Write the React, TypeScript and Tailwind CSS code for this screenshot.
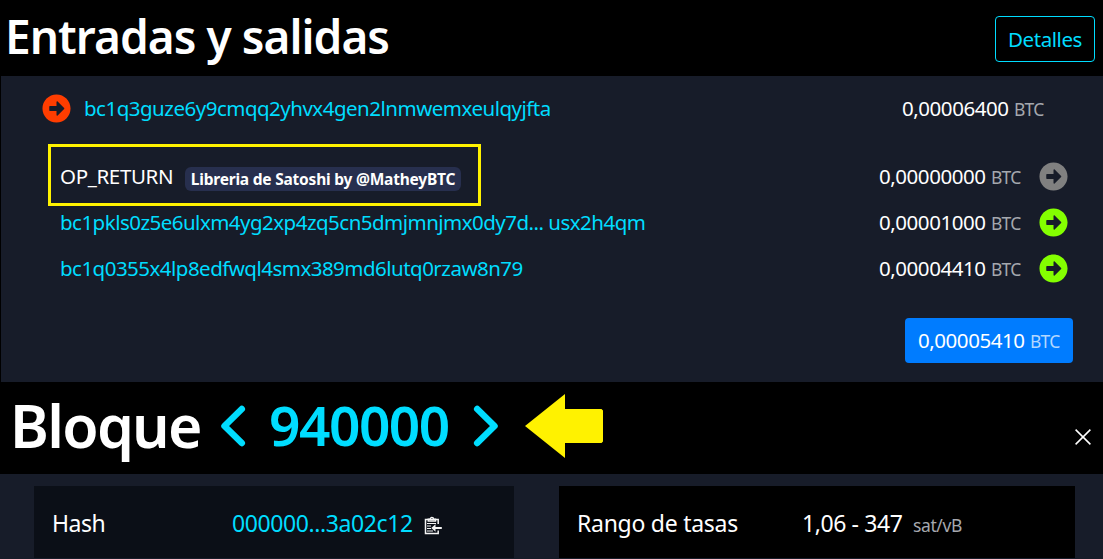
import clsx from "clsx"
import { FaArrowAltCircleRight } from "react-icons/fa"

const OUTPUTS = [
  { address: "OP_RETURN", message: "Libreria de Satoshi by @MatheyBTC", amount: "0,00000000", spent: null },
  { address: "bc1pkls0z5e6ulxm4yg2xp4zq5cn5dmjmnjmx0dy7d... usx2h4qm", amount: "0,00001000", spent: false },
  { address: "bc1q0355x4lp8edfwql4smx389md6lutq0rzaw8n79", amount: "0,00004410", spent: false },
]

function Amount({ value, className }: { value: string; className?: string }) {
  return (
    <span className="flex items-baseline whitespace-pre">
      <span className="w-[107px] text-[20.5px] tracking-[-0.45px]">{value}</span>
      <span className={clsx("ml-[5px] w-[31px] text-[17.5px] tracking-[-0.8px]", className ?? "text-[#a5a8ae]")}>BTC</span>
    </span>
  )
}

function Chevron({ flip }: { flip?: boolean }) {
  return (
    <svg viewBox="0 0 26 42" className={clsx("h-[42px] w-[26px] shrink-0", flip && "-scale-x-100")} fill="none">
      <path d="M21.8 4 4.5 21l17.300 17" stroke="#00ddff" strokeWidth="6.500" strokeLinecap="round" strokeLinejoin="round" />
    </svg>
  )
}

function ClipboardIcon() {
  return (
    <svg viewBox="0 0 18 19" className="ml-[11px] h-[19px] w-[18px]" fill="none" stroke="#f4f4f4">
      <path d="M14.2 8V3.500H1.500v14h12.700V14.500" strokeWidth="1.500" />
      <path d="M4.200 5V3.200h2a1.700 1.700 0 0 1 3.400 0h2V5z" strokeWidth="1.300" />
      <path d="M3 7.500h9M3 10h4M3 12.500h4M3 15h6" strokeWidth="1" />
      <path d="M17.800 12H9" strokeWidth="2" />
      <path d="M11.500 8.300v7.400L7.300 12z" fill="#f4f4f4" stroke="none" />
    </svg>
  )
}

export default function App() {
  return (
    <div className="flex h-[559px] w-[1103px] flex-col overflow-hidden bg-black font-['Noto_Sans',sans-serif] text-white">
      {/* Transaction header */}
      <div className="flex h-[76px] shrink-0 items-start justify-between pl-[5px] pr-2">
        <h1 className="mt-0.5 whitespace-nowrap text-[46px] leading-[68px] font-semibold tracking-[-0.95px]">Entradas y salidas</h1>
        <button className="mt-4 h-[46px] w-[100px] rounded-[4px] border border-[#00ddff] text-[20.5px] tracking-[-0.45px] text-[#00ddff]">
          Detalles
        </button>
      </div>

      {/* Inputs and outputs */}
      <div className="ml-px h-[306px] shrink-0 bg-[#171c29]">
        <div className="flex h-[65px] items-center pl-[41px] pr-[58px]">
          <FaArrowAltCircleRight className="size-[29px] text-[#ff3d00]" />
          <span className="ml-[13px] flex-1 whitespace-nowrap text-[20.5px] tracking-[-0.5px] text-[#00ddff]">
            bc1q3guze6y9cmqq2yhvx4gen2lnmwemxeulqyjfta
          </span>
          <Amount value="0,00006400" />
        </div>
        <div className="relative mt-3">
          {OUTPUTS.map((out) => (
            <div key={out.address} className="flex h-[46px] items-center pl-[59px] pr-[35px]">
              <div className="flex flex-1 items-center whitespace-nowrap">
                <span
                  className={clsx(
                    "text-[20.5px]",
                    out.message ? "tracking-[-0.35px]" : "tracking-[-0.52px] text-[#00ddff]",
                  )}
                >
                  {out.address}
                </span>
                {out.message && (
                  <span className="absolute top-[14px] left-[184px] flex h-6 w-[276px] items-center justify-center rounded-[6px] bg-[#272f4e] pt-px text-[15.5px] font-bold tracking-[-0.21px]">
                    {out.message}
                  </span>
                )}
              </div>
              <Amount value={out.amount} />
              <FaArrowAltCircleRight
                className={clsx("ml-[17px] size-[29px]", out.spent === null ? "text-[#808080]" : "text-[#84ff00]")}
              />
            </div>
          ))}
          <div className="absolute -top-[9px] left-[47px] h-[62px] w-[433px] border-[3px] border-[#fff200]" />
        </div>
        <div className="mt-[27px] mr-[30px] ml-auto flex h-[45px] w-[168px] items-center rounded-[4px] bg-[#007cff] pl-[13px]">
          <Amount value="0,00005410" className="text-[#b3d7ff]" />
        </div>
      </div>

      {/* Block header */}
      <div className="flex h-[92px] shrink-0 items-center pb-1 pl-[10px]">
        <h1 className="w-[210px] pb-[2px] text-[59px] leading-[80px] font-semibold tracking-[-1.7px]">Bloque</h1>
        <Chevron />
        <span className="ml-[23px] w-[181px] pb-0.5 text-[55px] leading-[80px] font-semibold tracking-[-1.5px] text-[#00ddff]">940000</span>
        <span className="ml-[23px] flex">
          <Chevron flip />
        </span>
        <svg viewBox="0 0 78 64" className="ml-[26px] h-16 w-[78px]">
          <path d="M0 32 40 0v15h36.500l1.500 1.500v31L76.500 49H40v15z" fill="#fff200" />
        </svg>
        <svg viewBox="0 0 16 16" className="mt-[21px] mr-3 ml-auto size-4" stroke="#fff" strokeWidth="1.500">
          <path d="m.6.6 14.800 14.800M15.400.6.6 15.400" />
        </svg>
      </div>

      {/* Block details */}
      <div className="flex h-[84px] shrink-0 bg-[#171c29] pt-3 text-[23px]">
        <div className="ml-[34px] flex h-[72px] w-[480px] items-center bg-[#0b0f17] pt-0.5 pl-[18px]">
          <span className="w-[180px] tracking-[-0.5px]">Hash</span>
          <span className="w-[181px] whitespace-nowrap tracking-[-0.4px] text-[#00ddff]">000000...3a02c12</span>
          <span className="mt-1">
            <ClipboardIcon />
          </span>
        </div>
        <div className="ml-[45px] flex h-[72px] w-[516px] items-center bg-black pt-0.5 pl-[18px]">
          <span className="w-[225px] tracking-[-0.27px]">Rango de tasas</span>
          <span className="flex items-baseline whitespace-nowrap">
            <span className="w-[105px] tracking-[-0.4px]">1,06 - 347</span>
            <span className="ml-1.5 text-[17.5px] tracking-[-0.4px] text-[#a5a8ae]">sat/vB</span>
          </span>
        </div>
      </div>
      <div className="h-px shrink-0 bg-[#171c29]" />
    </div>
  )
}
